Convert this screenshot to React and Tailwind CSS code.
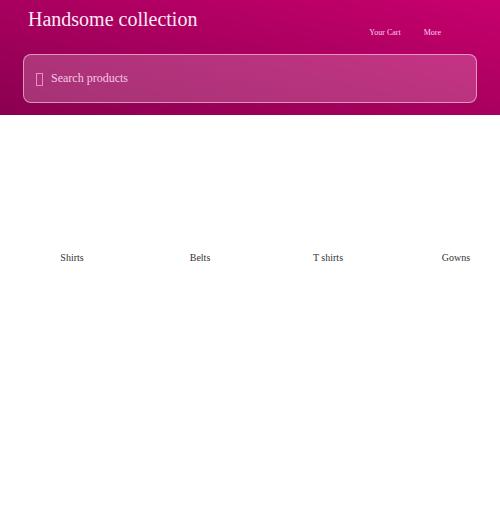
const categories = ["Shirts", "Belts", "T shirts", "Gowns"];

export default function App() {
  return (
    <div className="w-[500px] h-[518px] overflow-hidden bg-white font-['Liberation_Serif',serif]">
      <header className="h-[115px] bg-gradient-to-tr from-[#8a0050] to-[#c8006e] px-[23px]">
        <div className="flex h-[54px] items-start">
          <h1 className="pl-[5px] pt-[7px] text-[20px] leading-6 font-normal text-[#fde8f4]">Handsome collection</h1>
          <nav className="ml-auto mr-[36px] flex gap-[23px] pt-[26px] text-[8px] leading-3 text-[#ffd0ea]">
            <span className="translate-y-px">Your Cart</span>
            <span className="translate-y-px">More</span>
          </nav>
        </div>
        <div className="flex h-[49px] items-center rounded-[8px] border border-white/50 bg-white/20 pl-[12px]">
          <span className="h-[13px] w-[7px] border border-[#f08cc4] mt-px"></span>
          <span className="ml-[8px] -translate-y-px text-[12px] text-[#f8c8e4]">Search products</span>
        </div>
      </header>
      <ul className="flex w-[528px] pl-2 pt-[135px]">
        {categories.map((name) => (
          <li key={name} className="w-32 shrink-0 text-center text-[10px] leading-4 text-[#333]">
            {name}
          </li>
        ))}
      </ul>
    </div>
  );
}
